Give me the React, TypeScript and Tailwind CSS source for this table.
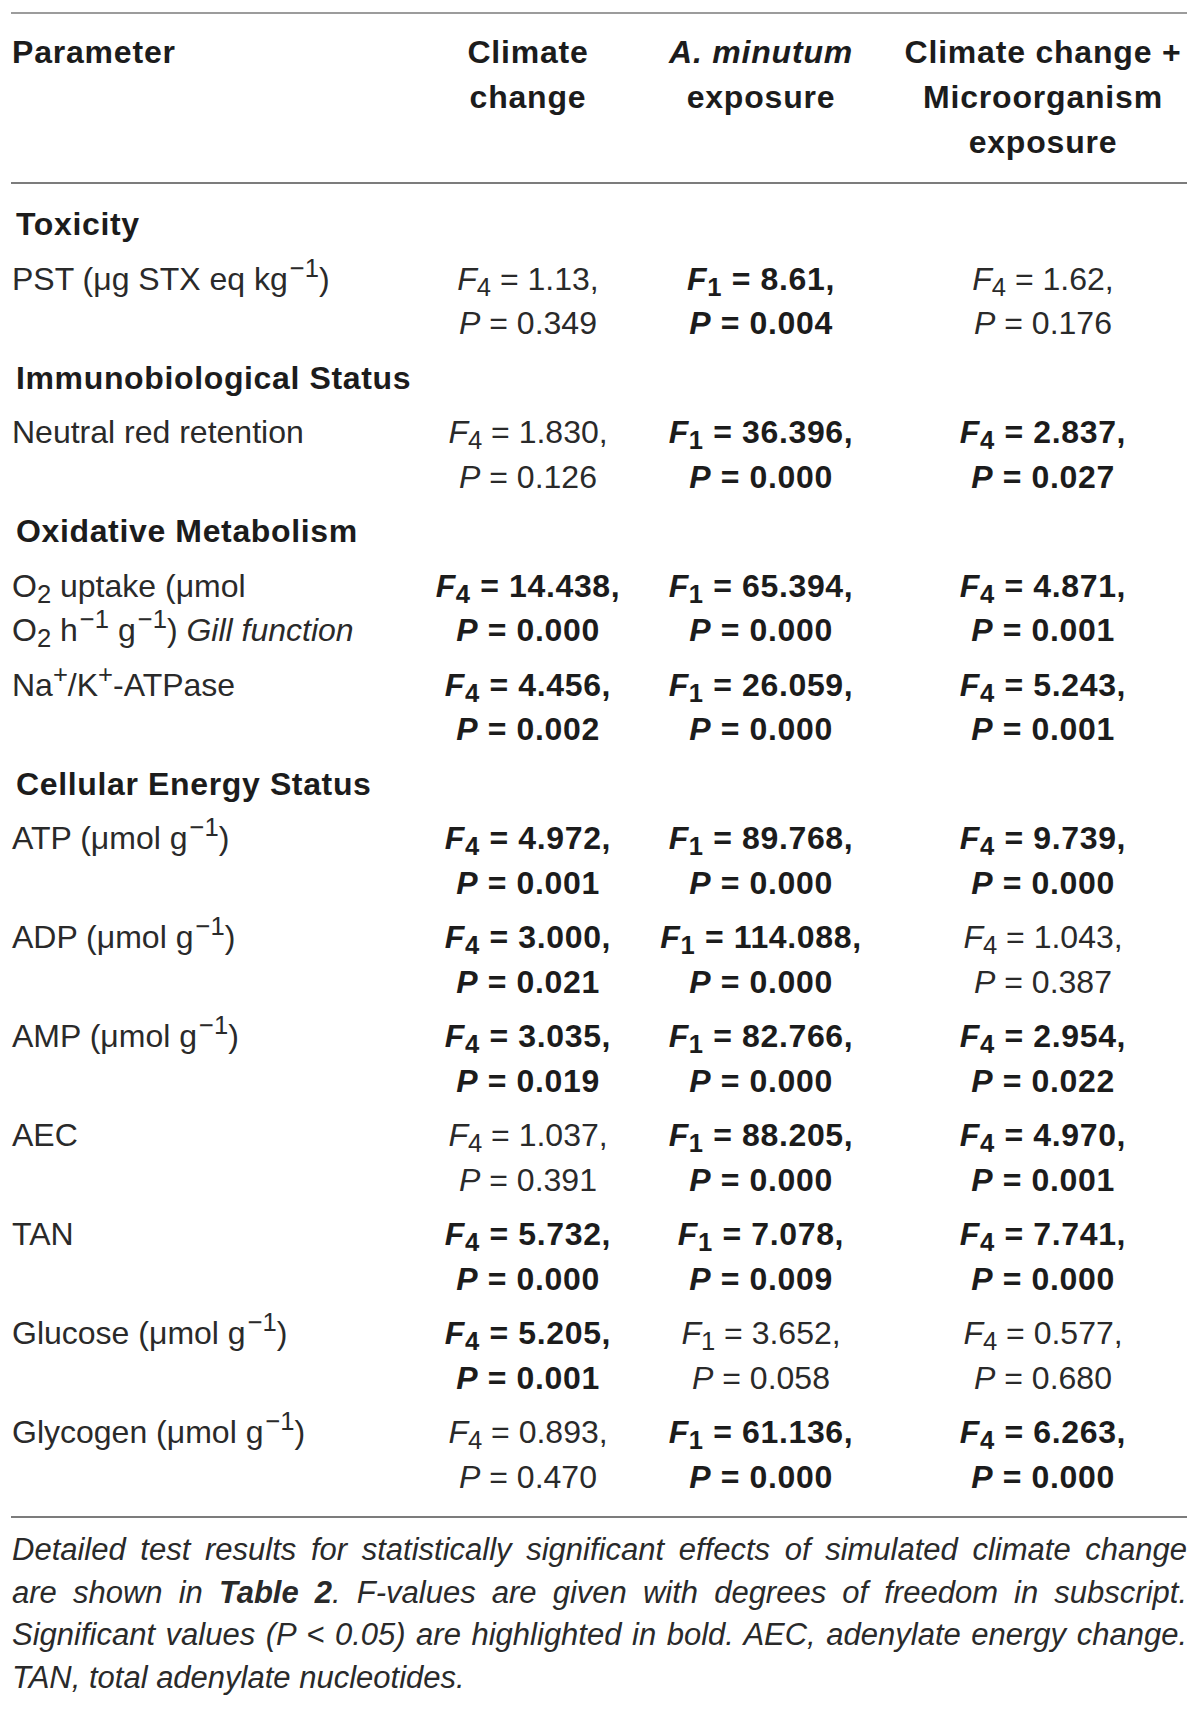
import React from "react";

type Stat = [string, string, string, boolean];

type Row =
  | { section: string }
  | { name: React.ReactNode; stats: [Stat, Stat, Stat] };

const um = "\u03bcmol";
const inv = <sup className="ml-[2px] text-[0.8em]">−1</sup>;

const rows: Row[] = [
  { section: "Toxicity" },
  {
    name: (
      <>
        PST (μg STX eq kg{inv})
      </>
    ),
    stats: [
      ["4", "1.13", "0.349", false],
      ["1", "8.61", "0.004", true],
      ["4", "1.62", "0.176", false],
    ],
  },
  { section: "Immunobiological Status" },
  {
    name: "Neutral red retention",
    stats: [
      ["4", "1.830", "0.126", false],
      ["1", "36.396", "0.000", true],
      ["4", "2.837", "0.027", true],
    ],
  },
  { section: "Oxidative Metabolism" },
  {
    name: (
      <>
        O<sub className="text-[0.8em]">2</sub> uptake ({um}
        <br />
        O<sub className="text-[0.8em]">2</sub> h{inv} g{inv}) <i>Gill function</i>
      </>
    ),
    stats: [
      ["4", "14.438", "0.000", true],
      ["1", "65.394", "0.000", true],
      ["4", "4.871", "0.001", true],
    ],
  },
  {
    name: (
      <>
        Na<sup className="text-[0.8em]">+</sup>/K<sup className="text-[0.8em]">+</sup>-ATPase
      </>
    ),
    stats: [
      ["4", "4.456", "0.002", true],
      ["1", "26.059", "0.000", true],
      ["4", "5.243", "0.001", true],
    ],
  },
  { section: "Cellular Energy Status" },
  {
    name: <>ATP ({um} g{inv})</>,
    stats: [
      ["4", "4.972", "0.001", true],
      ["1", "89.768", "0.000", true],
      ["4", "9.739", "0.000", true],
    ],
  },
  {
    name: <>ADP ({um} g{inv})</>,
    stats: [
      ["4", "3.000", "0.021", true],
      ["1", "114.088", "0.000", true],
      ["4", "1.043", "0.387", false],
    ],
  },
  {
    name: <>AMP ({um} g{inv})</>,
    stats: [
      ["4", "3.035", "0.019", true],
      ["1", "82.766", "0.000", true],
      ["4", "2.954", "0.022", true],
    ],
  },
  {
    name: "AEC",
    stats: [
      ["4", "1.037", "0.391", false],
      ["1", "88.205", "0.000", true],
      ["4", "4.970", "0.001", true],
    ],
  },
  {
    name: "TAN",
    stats: [
      ["4", "5.732", "0.000", true],
      ["1", "7.078", "0.009", true],
      ["4", "7.741", "0.000", true],
    ],
  },
  {
    name: <>Glucose ({um} g{inv})</>,
    stats: [
      ["4", "5.205", "0.001", true],
      ["1", "3.652", "0.058", false],
      ["4", "0.577", "0.680", false],
    ],
  },
  {
    name: <>Glycogen ({um} g{inv})</>,
    stats: [
      ["4", "0.893", "0.470", false],
      ["1", "61.136", "0.000", true],
      ["4", "6.263", "0.000", true],
    ],
  },
];

function StatCell({ stat }: { stat: Stat }) {
  const [df, f, p, sig] = stat;
  return (
    <div className={sig ? "font-bold tracking-[0.02em] text-[#1c1c1c]" : ""}>
      <div>
        <i>F</i>
        <sub className="text-[0.8em]">{df}</sub> = {f},
      </div>
      <div>
        <i>P</i> = {p}
      </div>
    </div>
  );
}

export default function App() {
  return (
    <div className="w-[1200px] min-h-[1709px] bg-white px-[11px] pt-[12px] font-[family-name:Liberation_Sans,Arial,sans-serif] text-[32px] text-[#2a2a2a]">
      <table className="w-[1176px] table-fixed border-collapse border-t-2 border-[#9c9c9c]">
        <colgroup>
          <col className="w-[410px]" />
          <col className="w-[214px]" />
          <col className="w-[252px]" />
          <col className="w-[300px]" />
        </colgroup>
        <thead>
          <tr className="border-b-2 border-[#7c7c7c] align-top font-bold leading-[45px] tracking-[0.025em] text-[#1c1c1c]">
            <th className="pt-[16px] pb-[17px] pl-[1px] text-left font-bold">
              Parameter
            </th>
            <th className="pt-[16px] pb-[17px] text-center font-bold">
              Climate
              <br />
              change
            </th>
            <th className="pt-[16px] pb-[17px] text-center font-bold">
              <i>A. minutum</i>
              <br />
              exposure
            </th>
            <th className="pt-[16px] pb-[17px] pl-[12px] text-center font-bold">
              Climate change +
              <br />
              Microorganism
              <br />
              exposure
            </th>
          </tr>
        </thead>
        <tbody className="border-b-2 border-[#7c7c7c] leading-[44.5px]">
          {rows.map((row, i) => {
            const first = i === 0;
            const last = i === rows.length - 1;
            const pad = `${first ? "pt-[18px]" : "pt-[5px]"} ${last ? "pb-[17px]" : "pb-[5px]"}`;
            if ("section" in row) {
              return (
                <tr key={i}>
                  <td
                    colSpan={4}
                    className={`${pad} pl-[5px] font-bold tracking-[0.02em] text-[#1c1c1c]`}
                  >
                    {row.section}
                  </td>
                </tr>
              );
            }
            return (
              <tr key={i} className="align-top">
                <td className={`${pad} pl-[1px] whitespace-nowrap`}>{row.name}</td>
                <td className={`${pad} text-center whitespace-nowrap`}>
                  <StatCell stat={row.stats[0]} />
                </td>
                <td className={`${pad} text-center whitespace-nowrap`}>
                  <StatCell stat={row.stats[1]} />
                </td>
                <td className={`${pad} pl-[12px] text-center whitespace-nowrap`}>
                  <StatCell stat={row.stats[2]} />
                </td>
              </tr>
            );
          })}
        </tbody>
      </table>

      <div className="w-[1176px] pt-[11px] pl-[1px] text-[31px] italic leading-[42.5px] text-[#2a2a2a]">
        <p className="text-justify whitespace-nowrap [text-align-last:justify]">
          Detailed test results for statistically significant effects of simulated climate change
        </p>
        <p className="text-justify whitespace-nowrap [text-align-last:justify]">
          are shown in <b>Table 2</b>. F-values are given with degrees of freedom in subscript.
        </p>
        <p className="text-justify whitespace-nowrap [text-align-last:justify]">
          Significant values (P &lt; 0.05) are highlighted in bold. AEC, adenylate energy change.
        </p>
        <p>TAN, total adenylate nucleotides.</p>
      </div>
    </div>
  );
}
